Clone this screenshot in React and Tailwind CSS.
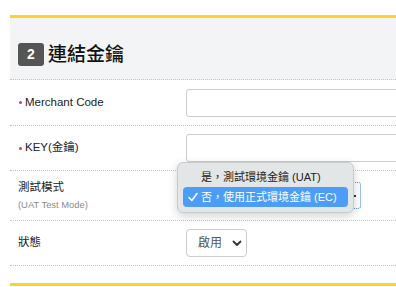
import React from "react";

const font = { fontFamily: '"Liberation Sans", "Noto Sans CJK TC", sans-serif' };

function Row({ h, children, label, sub, required }) {
  return (
    <div className={`flex border-b border-dotted border-[#c4c4c4] ${h}`}>
      <div className="w-[176px] shrink-0 flex flex-col justify-center pl-[8px]">
        <div className="flex items-center text-[11.5px] text-[#222] leading-none">
          {required && <span className="w-[3px] h-[3px] rounded-full bg-[#e53950] ml-[1px] mr-[3px]" />}
          <span>{label}</span>
        </div>
        {sub && <div className="text-[9.4px] text-[#8a8a8a] mt-[6px] leading-none">{sub}</div>}
      </div>
      <div className="flex-1 flex items-center">{children}</div>
    </div>
  );
}

export default function App() {
  return (
    <div lang="zh-TW" className="w-[396px] h-[287px] bg-white relative overflow-hidden" style={font}>
      <div className="pl-[10px] pt-[15px]">
        <div className="h-[3px] bg-[#fdd12e]" />
        <div className="h-[62px] bg-[#f3f4f6] flex items-start pl-[8px] pt-[25px] border-b border-dotted border-[#c4c4c4]">
          <div className="w-[26px] h-[23px] rounded-[3px] bg-[#555555] text-white text-[14px] font-bold flex items-center justify-center">2</div>
          <div className="ml-[4px] text-[19px] leading-[23px] font-medium text-[#111]">連結金鑰</div>
        </div>
        <Row h="h-[46px]" label="Merchant Code" required>
          <div className="w-[230px] h-[28px] border border-[#cccccc] rounded-[3px] bg-white" />
        </Row>
        <Row h="h-[45px]" label="KEY(金鑰)" required>
          <div className="w-[230px] h-[28px] border border-[#cccccc] rounded-[3px] bg-white" />
        </Row>
        <Row h="h-[50px]" label="測試模式" sub="(UAT Test Mode)">
          <div className="w-[175px] h-[27px] border border-dotted border-[#3b8ae0] rounded-[3px] bg-white flex items-center justify-end pr-[4px]">
            <span className="w-[2px] h-[2px] bg-[#333]" />
          </div>
        </Row>
        <Row h="h-[45px]" label="狀態">
          <div className="w-[61px] h-[28px] border border-[#cccccc] rounded-[4px] bg-white flex items-center pl-[11px] pr-[4px] justify-between">
            <span className="text-[12px] text-[#555]">啟用</span>
            <svg width="10" height="7" viewBox="0 0 10 7">
              <path d="M1.5 1.5 L5 5 L8.5 1.5" stroke="#333" strokeWidth="1.8" fill="none" strokeLinecap="round" strokeLinejoin="round" />
            </svg>
          </div>
        </Row>
        <div className="h-[17px]" />
        <div className="h-[3px] bg-[#fdd12e]" />
      </div>

      <div className="absolute left-[177px] top-[162px] w-[177px] h-[51px] rounded-[6px] bg-[#e3e6e6] border border-[#c8cbcb] shadow-[0_3px_10px_rgba(0,0,0,0.18)] px-[5px] py-[4px] text-[11px]">
        <div className="h-[20px] flex items-center pl-[18px] text-[#222]">是，測試環境金鑰 (UAT)</div>
        <div className="h-[20px] flex items-center rounded-[4px] bg-[#4c9df6] text-white relative pl-[18px]">
          <svg className="absolute left-[5px] top-[5px]" width="10" height="10" viewBox="0 0 10 10">
            <path d="M1 5.5 L3.8 8.5 L9 1.5" stroke="white" strokeWidth="1.5" fill="none" strokeLinecap="round" strokeLinejoin="round" />
          </svg>
          否，使用正式環境金鑰 (EC)
        </div>
      </div>
    </div>
  );
}
